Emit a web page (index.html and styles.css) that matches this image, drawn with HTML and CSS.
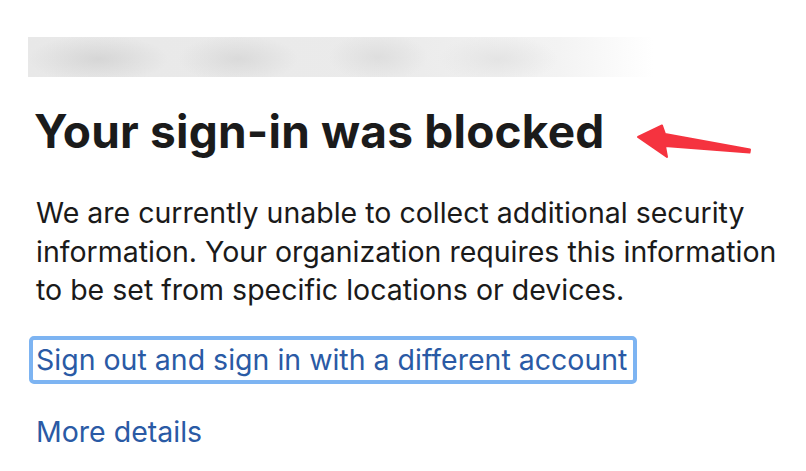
FILE: index.html
```html
<!DOCTYPE html>
<html lang="en">
<head>
<meta charset="utf-8">
<title>Your sign-in was blocked</title>
<link rel="stylesheet" href="styles.css">
</head>
<body>
<main class="page">
  <div class="blurred"></div>
  <div class="title-row">
    <h1 class="title">Your sign-in was blocked</h1>
    <svg class="arrow" width="130" height="40" viewBox="0 0 130 40" aria-hidden="true">
      <path d="M2 13 L26 1.5 L29 10 L114 25.5 L113.5 28.5 L29 22 L31 33 Z" fill="#f5333f" stroke="#f5333f" stroke-width="2" stroke-linejoin="round"/>
    </svg>
  </div>
  <p class="desc">We are currently unable to collect additional security information. Your organization requires this information to be set from specific locations or devices.</p>
  <a class="link focused" href="#">Sign out and sign in with a different account</a>
  <a class="link more" href="#">More details</a>
</main>
</body>
</html>
```
FILE: styles.css
```css
html, body {
  margin: 0;
  padding: 0;
  background: #ffffff;
}
.page {
  width: 806px;
  height: 471px;
  overflow: hidden;
  padding: 37px 0 0 28px;
  box-sizing: border-box;
  font-family: Inter, "Liberation Sans", sans-serif;
  display: flex;
  flex-direction: column;
  align-items: flex-start;
}
.blurred {
  width: 625px;
  height: 40px;
  background:
    radial-gradient(ellipse 70px 24px at 70px 22px, #d6d6d6, rgba(214,214,214,0) 100%),
    radial-gradient(ellipse 60px 24px at 210px 22px, #dadada, rgba(218,218,218,0) 100%),
    radial-gradient(ellipse 50px 24px at 350px 20px, #dedede, rgba(222,222,222,0) 100%),
    radial-gradient(ellipse 60px 24px at 470px 22px, #e4e4e4, rgba(228,228,228,0) 100%),
    linear-gradient(to right, #e8e8e8 0%, #ebebeb 60%, #f3f3f3 85%, #ffffff 100%);
}
.title-row {
  display: flex;
  align-items: flex-start;
  margin-top: 28px;
  padding-left: 6px;
}
.title {
  margin: 0;
  font-size: 46px;
  font-weight: 700;
  color: #1b1b1b;
  line-height: 52px;
  letter-spacing: 0.2px;
}
.arrow {
  margin-left: 32px;
  margin-top: 19px;
}
.desc {
  margin: 30px 0 0 8px;
  width: 770px;
  font-size: 28.5px;
  line-height: 38.5px;
  color: #1a1a1a;
}
.link {
  font-size: 28.5px;
  line-height: 40px;
  color: #2a5aa5;
  text-decoration: none;
}
.focused {
  margin-top: 26px;
  margin-left: 1px;
  padding: 0 6px 0 3px;
  border: 4px solid #7db4f2;
  border-radius: 5px;
}
.more {
  margin: 28px 0 0 8px;
}
```
